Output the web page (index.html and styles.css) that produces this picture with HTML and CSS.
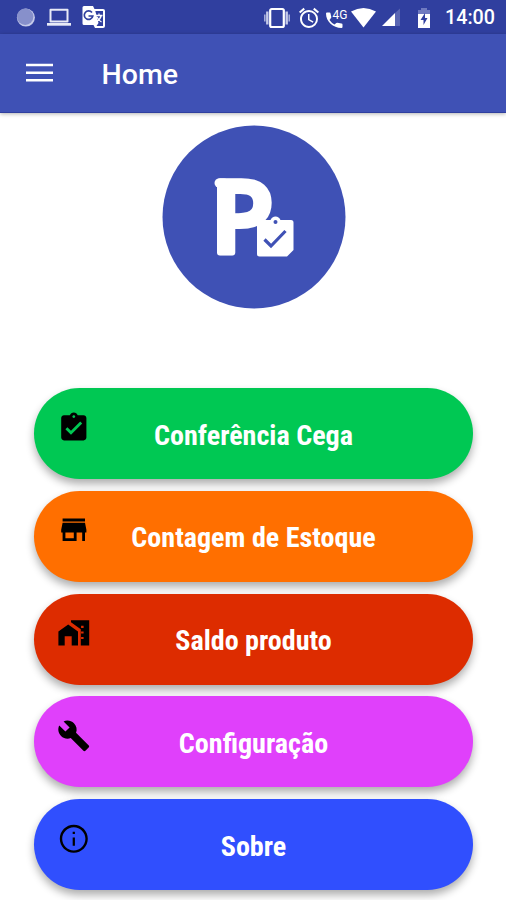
FILE: index.html
```html
<!DOCTYPE html>
<html lang="pt-BR">
<head>
    <meta charset="UTF-8">
    <meta name="viewport" content="width=device-width, initial-scale=1.0">
    <title>Home</title>
    <link rel="stylesheet" href="styles.css">
</head>
<body>
    <div class="status-bar">
        <div class="status-left">
            <svg width="20" height="20" viewBox="0 0 20 20"><circle cx="10.9" cy="10.6" r="9" fill="#c5cae9"/><circle cx="10.2" cy="9.7" r="8.2" fill="#8790cb"/></svg>
            <svg width="24" height="20" viewBox="0 0 24 20"><path d="M3.500 2.800h17v11.800h-17z" fill="none" stroke="#e8eaf6" stroke-width="2" stroke-linejoin="round"/><path d="M0 16h24v2.700H0z" fill="#e8eaf6"/></svg>
            <svg width="24" height="24" viewBox="0 0 24 24">
                <path d="M2 1h9l1.500 3H21q2 0 2 2v15q0 2-2 2h-8l-1.500-3H2q-1.500 0-1.500-1.500v-16Q.5 1 2 1z" fill="#fff"/>
                <path d="M13.300 6H21v15h-6.500l2-3z" fill="#303f9f"/>
                <path d="M10 7.500A4.300 4.300 0 1 0 10.800 11H6.500" fill="none" stroke="#303f9f" stroke-width="1.700"/>
                <path d="M13.500 10.500h7M17 8.500v2M19.300 10.500q-1 4-5 6M15 12q1.500 3.500 4.500 5" fill="none" stroke="#fff" stroke-width="1.300"/>
            </svg>
        </div>
        <div class="status-right">
            <svg width="26" height="22" viewBox="0 0 26 22"><rect x="6.200" y="2" width="13.600" height="18" rx="1.500" fill="none" stroke="#fff" stroke-width="2.200"/><path d="M3.300 4.500v13M22.700 4.500v13" stroke="#c5cae9" stroke-width="2.400"/><path d="M.8 7.500v7M25.200 7.500v7" stroke="#a5acd8" stroke-width="1.600"/></svg>
            <svg class="alarm" width="24" height="24" viewBox="0 0 24 24"><path fill="#fff" d="M22 5.720l-4.600-3.860-1.290 1.530 4.600 3.860L22 5.720zM7.880 3.390L6.600 1.860 2 5.710l1.290 1.530 4.590-3.850zM12.500 8H11v6l4.750 2.850.75-1.230-4-2.370V8zM12 4c-4.970 0-9 4.030-9 9s4.020 9 9 9a9 9 0 0 0 0-18zm0 16c-3.870 0-7-3.130-7-7s3.130-7 7-7 7 3.130 7 7-3.130 7-7 7z"/></svg>
            <svg class="phone" width="23" height="24" viewBox="0 0 23 24"><path fill="#fff" d="M2 6.500h2.500q1 0 1 1l.8 3.500q0 .8-.5 1.200L4.500 14q2 3 5 4.500l1.800-1.500q.5-.5 1.200-.3l4 .8q1 .2 1 1V21q0 1-1 1C8 22 1 15.500 1 7.500q0-1 1-1z"/><text x="7.500" y="13" class="network">4G</text></svg>
            <svg width="25" height="20" viewBox="0 0 25 20"><path fill="#fff" d="M0 3.500Q12.500-3.500 25 3.500L12.500 19.500z"/></svg>
            <svg class="signal" width="19" height="19" viewBox="0 0 19 19"><path fill="#fff" d="M0 18L13 5v13z"/><path fill="#5965b3" d="M13 5l5-4.500V18h-5z"/></svg>
            <svg class="battery" width="14" height="22" viewBox="0 0 14 22"><path fill="#6f7ac0" d="M4 1h6v2h3v5H1V3h3z"/><path fill="#fff" d="M1 7h12v14H1z"/><path fill="#303f9f" d="M8 6L3.500 13H6.500v5L10.500 11H8z"/></svg>
            <span class="clock">14:00</span>
        </div>
    </div>

    <div class="app-bar">
        <svg class="menu-icon" width="28" height="20" viewBox="0 0 28 20"><path d="M0 2h27M0 9.700h27M0 17.300h27" stroke="#fff" stroke-width="2.600"/></svg>
        <h1>Home</h1>
    </div>

    <div class="logo">
        <svg width="184" height="184" viewBox="0 0 184 184">
            <circle cx="92" cy="92" r="91.500" fill="#3f51b5"/>
            <path d="M62 58h-5" stroke="#fff" stroke-width="9" stroke-linecap="round"/>
            <text x="48.500" y="128" class="logo-letter" textLength="63" lengthAdjust="spacingAndGlyphs">P</text>
            <path d="M97 95h11.500q1.500-3.500 5-3.500t5 3.500h10.500q2.500 0 2.500 2.500V125l-6.500 6.500H97.500q-2.500 0-2.500-2.500V97.500Q95 95 97 95z" fill="#fff"/>
            <circle cx="113.500" cy="97" r="2" fill="#3f51b5"/>
            <path d="M102.500 114.500l6.500 6.500 14.500-15" fill="none" stroke="#3f51b5" stroke-width="3.200"/>
        </svg>
    </div>

    <div class="menu">
        <button class="item green">
            <svg class="icon" viewBox="0 0 24 24"><path d="M19 3h-4.180C14.400 1.840 13.300 1 12 1c-1.300 0-2.400.84-2.820 2H5c-1.100 0-2 .9-2 2v14c0 1.100.9 2 2 2h14c1.100 0 2-.9 2-2V5c0-1.100-.9-2-2-2zm-7 0c.55 0 1 .45 1 1s-.45 1-1 1-1-.45-1-1 .45-1 1-1zm-2 14l-4-4 1.410-1.410L10 14.170l6.590-6.590L18 9l-8 8z"/></svg>
            <span>Conferência Cega</span>
        </button>
        <button class="item orange">
            <svg class="icon" viewBox="0 0 24 24"><path d="M20 4H4v2h16V4zm1 10v-2l-1-5H4l-1 5v2h1v6h10v-6h4v6h2v-6h1zm-9 4H6v-4h6v4z"/></svg>
            <span>Contagem de Estoque</span>
        </button>
        <button class="item red">
            <svg class="icon" viewBox="0 0 24 24"><path d="M1 11v10h4.500v-6.500h5V21H15V11L8 6z"/><path fill-rule="evenodd" d="M10 3v1.500l7 5V21h6V3H10zm7.200 4h1.800v1.500h-1.800zm0 4h1.800v1.500h-1.800zm0 4h1.800v1.500h-1.800z"/></svg>
            <span>Saldo produto</span>
        </button>
        <button class="item purple">
            <svg class="icon" viewBox="0 0 24 24"><path d="M22.700 19l-9.100-9.100c.9-2.300.4-5-1.500-6.900-2-2-5-2.400-7.400-1.300L9 6 6 9 1.600 4.700C.4 7.100.9 10.100 2.900 12.100c1.900 1.900 4.600 2.400 6.900 1.500l9.100 9.100c.4.4 1 .4 1.400 0l2.300-2.300c.5-.4.5-1.100.1-1.400z"/></svg>
            <span>Configuração</span>
        </button>
        <button class="item blue">
            <svg class="icon" viewBox="0 0 24 24"><path d="M11.200 7h1.600v1.600h-1.600zm0 4h1.600v6h-1.600zM12 2C6.480 2 2 6.480 2 12s4.480 10 10 10 10-4.480 10-10S17.520 2 12 2zm0 18.300c-4.580 0-8.300-3.720-8.300-8.300S7.420 3.700 12 3.700s8.300 3.720 8.300 8.300-3.720 8.300-8.300 8.300z"/></svg>
            <span>Sobre</span>
        </button>
    </div>
</body>
</html>
```

FILE: styles.css
```css
* {
    margin: 0;
    padding: 0;
    box-sizing: border-box;
}

body {
    height: 900px;
    overflow: hidden;
    background: #fff;
    color: #fff;
    font-family: Roboto, sans-serif;
}

.status-bar {
    display: flex;
    justify-content: space-between;
    align-items: center;
    height: 34px;
    padding: 0 11px 0 15px;
    background: #303f9f;
}

.status-left,
.status-right {
    display: flex;
    align-items: center;
}

.status-left {
    gap: 11.5px;
}

.status-right svg {
    margin-top: 1px;
}

.status-right .alarm {
    margin-left: 7px;
}

.status-right .phone {
    margin-left: 4px;
    margin-right: 3px;
}

.status-right .signal {
    margin-left: 6px;
}

.status-right .battery {
    margin-left: 16px;
    margin-right: 14px;
}

.network {
    fill: #fff;
    font-size: 12px;
}

.clock {
    padding-top: 2px;
    font-size: 19.7px;
    font-weight: 500;
    line-height: 32px;
}

.app-bar {
    display: flex;
    align-items: center;
    height: 79px;
    padding-left: 26px;
    background: #3f51b5;
    border-bottom: 1px solid #303f9f;
    box-shadow: 0 1px 4px rgba(0, 0, 0, 0.3);
}

.app-bar h1 {
    padding-top: 2px;
    margin-left: 47.5px;
    font-size: 28.5px;
    font-weight: 500;
}

.logo {
    display: flex;
    justify-content: center;
    height: 184px;
    padding-left: 1px;
    margin-top: 12px;
}

.logo-letter {
    fill: #fff;
    stroke: #fff;
    stroke-width: 6px;
    stroke-linejoin: round;
    font-family: "Open Sans", sans-serif;
    font-size: 99px;
    font-weight: 600;
}

.menu {
    display: flex;
    flex-direction: column;
    gap: 11.7px;
    padding: 0 33px 0 34px;
    margin-top: 79.3px;
}

.item {
    display: grid;
    grid-template-columns: 33.6px 1fr 33.6px;
    align-items: center;
    height: 91px;
    padding: 0 23px;
    border: none;
    border-radius: 46px;
    box-shadow: 0 5px 9px rgba(0, 0, 0, 0.32);
    color: #fff;
    font-family: "Roboto Condensed", Roboto, sans-serif;
    font-size: 28.1px;
    font-weight: 700;
    font-stretch: 75%;
    cursor: pointer;
}

.item span {
    padding-top: 3px;
}

.icon {
    align-self: start;
    width: 33.6px;
    height: 33.6px;
    margin-top: 22.5px;
    fill: #000;
}

.green { background: #00c853; }
.orange { background: #ff6f00; }
.red { background: #dd2c00; }
.purple { background: #e040fb; }
.blue { background: #304ffe; }
```
